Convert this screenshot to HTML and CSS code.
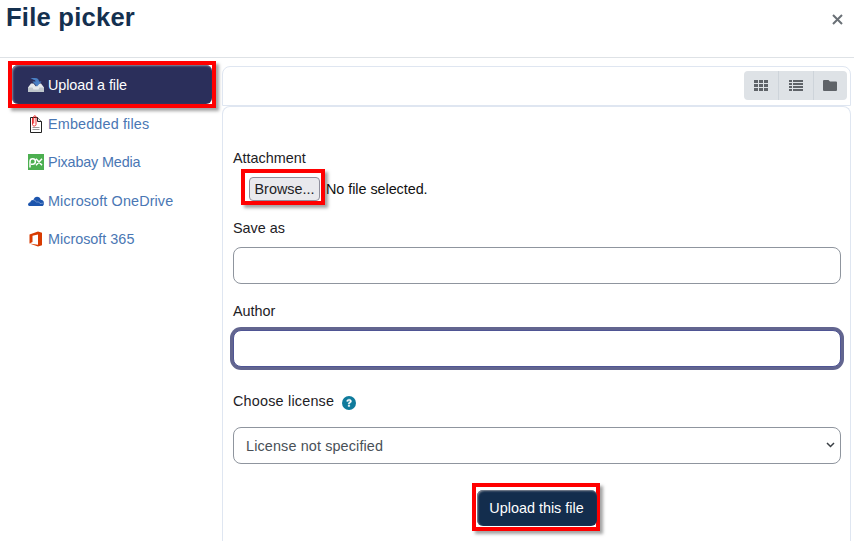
FILE: index.html
```html
<!DOCTYPE html>
<html lang="en">
<head>
<meta charset="utf-8">
<title>File picker</title>
<link rel="stylesheet" href="styles.css">
</head>
<body>
<div class="dialog">
  <header class="head">
    <h1 class="title">File picker</h1>
    <svg class="close" viewBox="0 0 11 11" role="img" aria-label="Close"><path d="M1 1l9 9M10 1l-9 9" fill="none" stroke="#6a7076" stroke-width="2"/></svg>
  </header>
  <div class="main">
    <nav class="side">
      <div class="callout side-callout">
        <a class="nav nav-active">
          <svg class="ico" viewBox="0 0 16 16"><path d="M0 10.500l3-4h2.500l2.500 3 2.500-3H13l3 4v4.500H0z" fill="#e6eaec"/><path d="M0 10.500h4.500l1 2h5l1-2H16V15H0z" fill="#bfc6cb"/><path d="M2.500 1h4.500c2.800 0 4 1.600 4 3.500h2.500L9 9.500 4.500 4.500H7.500c0-1-.8-1.700-2-1.700z" fill="#4a80c4"/></svg>
          <span class="nav-active-text">Upload a file</span>
        </a>
      </div>
      <a class="nav nav-embedded">
        <svg class="ico ico-doc" viewBox="0 0 14 18"><path d="M1.500 2.500h7l4 4v11h-11z" fill="#fff" stroke="#222"/><path d="M8.500 2.500v4h4" fill="#e5e5e5" stroke="#222"/><path d="M3.500 12.500h7M3.500 14.500h7" stroke="#999"/><path d="M3.500 3v6.500c0 2 3.500 2 3.500 0V2C7 .3 4.700 .3 4.700 2v6.500" fill="none" stroke="#e81c1c" stroke-width=".9"/></svg>
        <span>Embedded files</span>
      </a>
      <a class="nav nav-pixabay">
        <svg class="ico" viewBox="0 0 16 16"><rect width="16" height="16" fill="#4caf50"/><path d="M2 13.500V7.500A2.700 2.700 0 1 1 4.700 10.200H3M8 4.800l6 6.400M14 4.800l-6 6.400" fill="none" stroke="#fff" stroke-width="1.500"/></svg>
        <span>Pixabay Media</span>
      </a>
      <a class="nav nav-drive">
        <svg class="ico" viewBox="0 0 16 16"><path d="M0 12c0-1.500 1-2.500 2.300-2.700C2.600 7.700 4 6.900 5.300 7.100 6 5 7.500 3.800 9 3.800c2 0 3.300 1.200 3.800 3 1.800 0 3.200 1.400 3.200 3.100 0 1.300-.5 2.400-1.300 3H1z" fill="#1c55ad"/><path d="M5.300 7.100c1.500.1 2.600.9 3.200 2.100 1.400-.6 3-.1 3.600 1.300L16 10" fill="none" stroke="#fff" stroke-width=".6" opacity=".6"/></svg>
        <span>Microsoft OneDrive</span>
      </a>
      <a class="nav">
        <svg class="ico" viewBox="0 0 16 16"><path d="M1.500 3.500 10 .5l4 1.200v12.600L10 15.500l-8.500-3 8.500 1.200V3.600L4.500 4.800V11l-3 1.500z" fill="#d83b01"/></svg>
        <span>Microsoft 365</span>
      </a>
    </nav>
    <section class="content">
      <div class="toolbar">
        <div class="views">
          <span class="view"><svg class="view-ico" viewBox="0 0 14 11"><path d="M0 0h4v3H0zM5 0h4v3H5zM10 0h4v3h-4zM0 4h4v3H0zM5 4h4v3H5zM10 4h4v3h-4zM0 8h4v3H0zM5 8h4v3H5zM10 8h4v3h-4z" fill="#5f6368"/></svg></span>
          <span class="view"><svg class="view-ico" viewBox="0 0 14 11"><path d="M0 0h3v2H0zM4 0h10v2H4zM0 3h3v2H0zM4 3h10v2H4zM0 6h3v2H0zM4 6h10v2H4zM0 9h3v2H0zM4 9h10v2H4z" fill="#5f6368"/></svg></span>
          <span class="view"><svg class="view-ico" viewBox="0 0 14 11"><path d="M1 0h4.500l1.500 1.500h6a1 1 0 0 1 1 1V10a1 1 0 0 1-1 1H1a1 1 0 0 1-1-1V1a1 1 0 0 1 1-1z" fill="#5f6368"/></svg></span>
        </div>
      </div>
      <form class="form">
        <label class="label label-attach">Attachment</label>
        <div class="file-row">
          <span class="callout file-callout"><button type="button" class="browse">Browse...</button></span>
          <span class="file-text">No file selected.</span>
        </div>
        <label class="label label-save" for="saveas">Save as</label>
        <input class="input" id="saveas" type="text">
        <label class="label label-author" for="author">Author</label>
        <input class="input input-focus" id="author" type="text">
        <div class="label label-license"><span class="license-text">Choose license</span>
          <svg class="help" viewBox="0 0 14 14"><circle cx="7" cy="7" r="7" fill="#0f7b9c"/><path d="M4.600 5.300C4.800 3.900 5.800 3.200 7.100 3.200c1.400 0 2.400.8 2.400 2 0 1-.6 1.500-1.300 1.900-.5.300-.6.500-.6 1H6.200c0-1 .3-1.500 1-1.900.5-.3.8-.5.800-.9s-.4-.7-.9-.7-.9.300-1 .9zM6.200 9h1.500v1.600H6.200z" fill="#fff" stroke="#fff" stroke-width=".4"/></svg>
        </div>
        <div class="select-wrap">
          <select class="select"><option>License not specified</option></select>
          <svg class="chev" viewBox="0 0 9 6"><path d="M1 1l3.500 3.500L8 1" fill="none" stroke="#3a3f44" stroke-width="1.500"/></svg>
        </div>
        <div class="submit-row">
          <span class="callout submit-callout"><button type="button" class="submit">Upload this file</button></span>
        </div>
      </form>
    </section>
  </div>
</div>
</body>
</html>
```
FILE: styles.css
```css
* { box-sizing: border-box; }
html, body { margin: 0; padding: 0; background: #fff; }
body { width: 854px; height: 541px; overflow: hidden; font-family: "Liberation Sans", Arial, sans-serif; font-size: 14.4px; color: #1d2125; }
.dialog { display: flex; flex-direction: column; height: 541px; overflow: hidden; }
.head { height: 58px; flex: none; display: flex; justify-content: space-between; align-items: flex-start; border-bottom: 1px solid #dee2e6; padding: 0 11px 0 6px; }
.title { margin: 2px 0 0; font-size: 25.6px; line-height: 30px; font-weight: 700; color: #14304f; letter-spacing: .22px; }
.close { width: 11px; height: 11px; margin-top: 14px; }
.main { display: flex; flex: 1; min-height: 0; }
.side { width: 222px; flex: none; padding: 3px 0 0 8px; display: flex; flex-direction: column; }
.callout { display: inline-block; border: 4px solid #f00; box-shadow: 3px 3px 3px rgba(90,90,90,.55); }
.side-callout { width: 208px; height: 47px; }
.nav { display: flex; align-items: center; gap: 4px; height: 38.400px; padding-left: 20px; color: #4a77b4; line-height: 18px; }
.side-callout + .nav { margin-top: -3.300px; }
.nav-active { height: 39px; padding-left: 16px; background: #2b2f5b; color: #fff; border-radius: 6px; box-shadow: inset 1px 1px 2px #8a8a9a; }
.nav-active-text { letter-spacing: -.08px; }
.nav-embedded span { letter-spacing: .15px; }
.nav-pixabay span { letter-spacing: -.15px; }
.nav-drive span { letter-spacing: .12px; }
.ico { width: 16px; height: 16px; flex: none; }
.ico-doc { height: 18px; }
.content { flex: 1; padding: 8px 3px 0 0; min-width: 0; }
.toolbar { height: 40px; border: 1px solid #dfe6f1; border-radius: 8px 8px 0 0; display: flex; justify-content: flex-end; align-items: flex-start; padding: 4px 3px 0 0; }
.views { display: flex; height: 29px; background: #dee2e6; border-radius: 4px; }
.view { width: 34.500px; display: flex; align-items: center; justify-content: center; }
.view + .view { border-left: 1px solid #ced4da; }
.view-ico { width: 14px; height: 11px; }
.form { border: 1px solid #dfe6f1; border-bottom: 0; border-radius: 8px 8px 0 0; padding: 42px 9px 0 10px; height: 500px; }
.label { display: block; line-height: 18px; }
.file-row { display: flex; align-items: flex-start; margin-top: 2px; height: 36px; }
.file-callout { width: 84px; height: 36px; margin-left: 8px; padding: 4px 1px 0 4px; }
.browse { display: block; width: 71px; height: 24px; padding: 0; font: inherit; color: #1d2125; background: #e9e9ed; border: 1px solid #8f8f9d; border-radius: 4px; }
.file-text { margin: 11px 0 0 1px; line-height: 18px; color: #111; letter-spacing: -.05px; }
.label-save { margin-top: 14px; }
.input { display: block; width: 100%; height: 37px; margin: 10px 0 0; padding: 0 12px; font: inherit; background: #fff; border: 1px solid #8f959e; border-radius: 8px; outline: 0; }
.label-author { margin-top: 18px; }
.input-focus { border-color: #4f5594; box-shadow: 0 0 0 3px #62658f; }
.label-license { margin-top: 25px; display: flex; align-items: center; }
.license-text { letter-spacing: .2px; }
.help { width: 14px; height: 14px; margin-left: 8px; margin-top: 3px; }
.select-wrap { position: relative; margin-top: 17px; }
.select { display: block; width: 100%; height: 37px; padding: 0 28px 0 12px; font: inherit; letter-spacing: .13px; color: #495057; background: #fff; border: 1px solid #8f959e; border-radius: 8px; outline: 0; appearance: none; }
.chev { position: absolute; right: 6px; top: 15px; width: 9px; height: 6px; pointer-events: none; }
.submit-row { display: flex; justify-content: center; margin-top: 19px; padding-right: 3px; }
.submit-callout { width: 128px; height: 48px; padding: 3px 0 0 1px; }
.submit { display: block; width: 120px; height: 36px; padding: 0; font: inherit; color: #fff; background: #132d4d; border: 0; border-radius: 6px; box-shadow: inset 1px 1px 2px #8a8f9a; }
```
